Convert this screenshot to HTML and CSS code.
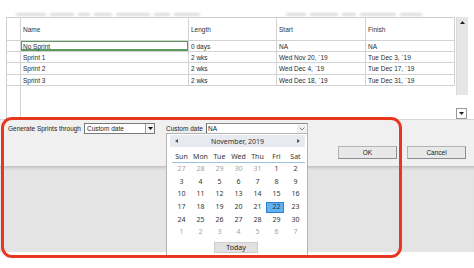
FILE: index.html
```html
<!DOCTYPE html>
<html>
<head>
<meta charset="utf-8">
<link rel="stylesheet" href="styles.css">
</head>
<body>
<div class="page">
  <div class="ghost">
    <i class="gb w30"></i><i class="gb w24"></i><i class="gb w12"></i><i class="gb w18"></i><i class="gb w34"></i><i class="gb w16"></i><i class="gb w26"></i><i class="gb w20 gap"></i><i class="gb w28"></i><i class="gb w14"></i><i class="gb w36"></i><i class="gb w22"></i>
  </div>

  <div class="gridarea">
    <div class="grid">
      <div class="row head">
        <div class="c rh"></div><div class="c">Name</div><div class="c">Length</div><div class="c">Start</div><div class="c">Finish</div>
      </div>
      <div class="row r1">
        <div class="c rh"></div><div class="c sel">No Sprint</div><div class="c">0 days</div><div class="c">NA</div><div class="c">NA</div>
      </div>
      <div class="row r2">
        <div class="c rh"></div><div class="c">Sprint 1</div><div class="c">2 wks</div><div class="c">Wed Nov 20, `19</div><div class="c">Tue Dec 3, `19</div>
      </div>
      <div class="row r3">
        <div class="c rh"></div><div class="c">Sprint 2</div><div class="c">2 wks</div><div class="c">Wed Dec 4, `19</div><div class="c">Tue Dec 17, `19</div>
      </div>
      <div class="row r4">
        <div class="c rh"></div><div class="c">Sprint 3</div><div class="c">2 wks</div><div class="c">Wed Dec 18, `19</div><div class="c">Tue Dec 31, `19</div>
      </div>
      <div class="filler"><div class="rh"></div><div></div></div>
    </div>
    <div class="side">
      <div class="vscroll"><svg width="5" height="3" viewBox="0 0 5 3"><path d="M0 3 L2.5 0 L5 3 Z" fill="#222"/></svg></div>
      <div class="cb"><svg width="5" height="3" viewBox="0 0 5 3"><path d="M0 0 L5 0 L2.5 3 Z" fill="#222"/></svg></div>
    </div>
  </div>

  <div class="panel">
    <div class="prow">
      <span class="lbl1">Generate Sprints through</span>
      <div class="combo"><span class="combo-text">Custom date</span><span class="combo-btn"><svg width="5" height="3" viewBox="0 0 5 3"><path d="M0 0 L5 0 L2.5 3 Z" fill="#111"/></svg></span></div>
      <span class="lbl2">Custom date</span>
      <div class="datebox"><span class="date-text">NA</span><span class="date-btn"><svg width="6" height="4" viewBox="0 0 6 4"><path d="M0.5 0.5 L3 3 L5.5 0.5" fill="none" stroke="#8a8a8a" stroke-width="1"/></svg></span></div>
    </div>
    <div class="brow">
      <button class="btn">OK</button>
      <button class="btn">Cancel</button>
    </div>
  </div>

  <div class="lower"></div>

  <div class="calendar">
    <div class="cal-head">
      <svg class="arr" width="3" height="4" viewBox="0 0 3 4"><path d="M3 0 L0 2 L3 4 Z" fill="#555"/></svg>
      <span class="month">November, 2019</span>
      <svg class="arr" width="3" height="4" viewBox="0 0 3 4"><path d="M0 0 L3 2 L0 4 Z" fill="#555"/></svg>
    </div>
    <div class="dow"><span>Sun</span><span>Mon</span><span>Tue</span><span>Wed</span><span>Thu</span><span>Fri</span><span>Sat</span></div>
    <div class="days">
      <span class="o">27</span><span class="o">28</span><span class="o">29</span><span class="o">30</span><span class="o">31</span><span>1</span><span>2</span>
      <span>3</span><span>4</span><span>5</span><span>6</span><span>7</span><span>8</span><span>9</span>
      <span>10</span><span>11</span><span>12</span><span>13</span><span>14</span><span>15</span><span>16</span>
      <span>17</span><span>18</span><span>19</span><span>20</span><span>21</span><span class="sel-day"><b>22</b></span><span>23</span>
      <span>24</span><span>25</span><span>26</span><span>27</span><span>28</span><span>29</span><span>30</span>
      <span class="o">1</span><span class="o">2</span><span class="o">3</span><span class="o">4</span><span class="o">5</span><span class="o">6</span><span class="o">7</span>
    </div>
    <div class="today-row"><button class="today">Today</button></div>
  </div>

  <div class="annot"></div>
</div>
</body>
</html>
```

FILE: styles.css
```css
* { box-sizing: border-box; }
html, body { margin: 0; padding: 0; background: #fff; }
body {
  width: 474px;
  height: 268px;
  overflow: hidden;
  font-family: "Liberation Sans", Arial, sans-serif;
  font-size: 6.5px;
  color: #1a1a1a;
}
.page { position: relative; width: 474px; height: 268px; }

/* faint cropped row at the very top */
.ghost {
  height: 17px;
  display: flex;
  align-items: flex-end;
  gap: 4px;
  padding: 0 0 1px 16px;
}
.gb {
  display: block;
  height: 3px;
  background: #dcdcdc;
  filter: blur(0.8px);
  border-radius: 1px;
}
.w12 { width: 12px; }
.w14 { width: 14px; }
.w16 { width: 16px; }
.w18 { width: 18px; }
.w20 { width: 20px; }
.w22 { width: 22px; }
.w24 { width: 24px; }
.w26 { width: 26px; }
.w28 { width: 28px; }
.w30 { width: 30px; }
.w34 { width: 34px; }
.w36 { width: 36px; }
.gap { margin-left: 82px; }

/* grid */
.gridarea { display: flex; height: 102px; }
.grid {
  margin-left: 6px;
  width: 449px;
  border-left: 1px solid #cfcfcf;
  border-top: 1px solid #cfcfcf;
  display: flex;
  flex-direction: column;
}
.row {
  display: grid;
  grid-template-columns: 14px 168px 88px 89px 89px;
}
.head { height: 23px; }
.r1 { height: 11px; }
.r2 { height: 11px; }
.r3 { height: 12px; }
.r4 { height: 11px; }
.c {
  border-right: 1px solid #d2d2d2;
  border-bottom: 1px solid #d2d2d2;
  padding-left: 2px;
  display: flex;
  align-items: center;
  white-space: nowrap;
  overflow: hidden;
  color: #2a2a2a;
}
.head .c { color: #333; }
.c.sel { box-shadow: inset 0 0 0 1px #5e9a5e, inset 0 -2px 0 0 #5e9a5e; }
.filler { flex: 1; display: grid; grid-template-columns: 14px 1fr; }
.filler .rh { border-right: 1px solid #d2d2d2; }

.side { width: 12px; margin-left: 1px; display: flex; flex-direction: column; }
.vscroll {
  height: 78px;
  background: #e6e6e6;
  border-left: 1px solid #dadada;
  display: flex;
  justify-content: center;
  padding-top: 4px;
}
.vscroll svg { display: block; }
.cb {
  margin-top: 13px;
  height: 11px;
  width: 11px;
  border: 1px solid #9a9a9a;
  background: #fff;
  display: flex;
  align-items: center;
  justify-content: center;
}

/* panel */
.panel {
  height: 47px;
  background: #f0f0f0;
  border-top: 1px solid #d6d6d6;
  padding-top: 3px;
}
.prow { display: flex; align-items: center; height: 11px; padding-left: 8px; }
.lbl1 { width: 76px; white-space: nowrap; color: #222; }
.combo {
  width: 71px;
  height: 11px;
  background: #fff;
  border: 1px solid #7a7a7a;
  display: flex;
  align-items: center;
}
.combo-text { flex: 1; padding-left: 2px; }
.combo-btn {
  width: 9px;
  height: 9px;
  border-left: 1px solid #9a9a9a;
  background: #f4f4f4;
  display: flex;
  align-items: center;
  justify-content: center;
}
.lbl2 { margin-left: 11px; width: 40px; white-space: nowrap; color: #222; }
.datebox {
  width: 102px;
  height: 11px;
  background: #fff;
  border: 1px solid #b9b9b9;
  border-left-color: #6e6e6e;
  border-top-color: #8a8a8a;
  display: flex;
  align-items: center;
}
.date-text { flex: 1; padding-left: 1px; }
.date-btn {
  width: 10px;
  height: 9px;
  background: #f2f2f2;
  display: flex;
  align-items: center;
  justify-content: center;
}
.brow {
  display: flex;
  justify-content: flex-end;
  gap: 10px;
  padding-right: 8px;
  margin-top: 12px;
}
.btn {
  width: 59px;
  height: 13px;
  padding: 0;
  margin: 0;
  font-family: "Liberation Sans", Arial, sans-serif;
  font-size: 6.5px;
  color: #222;
  background: #e8e8e8;
  border: 1px solid #b4b4b4;
  border-bottom-color: #8c8c8c;
  border-right-color: #8c8c8c;
}

.lower {
  height: 86px;
  background: #e4e4e4;
  border-top: 1px solid #c4c4c4;
  box-shadow: inset 0 3px 3px -2px rgba(0,0,0,0.15);
}

/* calendar popup */
.calendar {
  position: absolute;
  left: 166px;
  top: 133px;
  width: 142px;
  height: 125px;
  background: #fff;
  border: 1px solid #b3b3b3;
  font-family: "Noto Sans", "Open Sans", sans-serif;
  font-size: 7px;
  color: #333;
}
.cal-head {
  margin: 1px 2px 0 3px;
  height: 12px;
  background: #e8eaf1;
  display: flex;
  align-items: center;
  justify-content: space-between;
  padding: 0 5px 0 5px;
}
.arr { display: block; }
.month { color: #333; }
.dow {
  margin: 5px 2px 0 5px;
  height: 11px;
  display: grid;
  grid-template-columns: repeat(7, 19px);
  border-bottom: 1px solid #9ec3de;
  align-items: center;
  line-height: 10px;
}
.dow span, .days span { text-align: center; }
.days {
  margin-left: 5px;
  width: 133px;
  display: grid;
  grid-template-columns: repeat(7, 19px);
  grid-auto-rows: 12.6px;
  align-items: center;
  line-height: 10px;
}
.days .o { color: #a3a3a3; }
.sel-day { display: flex; justify-content: center; }
.sel-day b {
  font-weight: normal;
  width: 18px;
  height: 11px;
  background: #62b1f1;
  border: 1px solid #2a80cf;
  display: flex;
  align-items: center;
  justify-content: center;
  margin-left: -3px;
  padding-left: 3px;
}
.today-row { display: flex; justify-content: center; margin-top: 3px; padding-right: 2px; }
.today {
  width: 44px;
  height: 11px;
  padding: 0;
  font-family: "Noto Sans", "Open Sans", sans-serif;
  font-size: 7px;
  line-height: 9px;
  color: #222;
  background: #e1e1e1;
  border: 1px solid #cdcdcd;
}

/* red annotation */
.annot {
  position: absolute;
  left: 1px;
  top: 117px;
  width: 401px;
  height: 141px;
  border: 3px solid #e8361f;
  border-radius: 11px;
}
```
